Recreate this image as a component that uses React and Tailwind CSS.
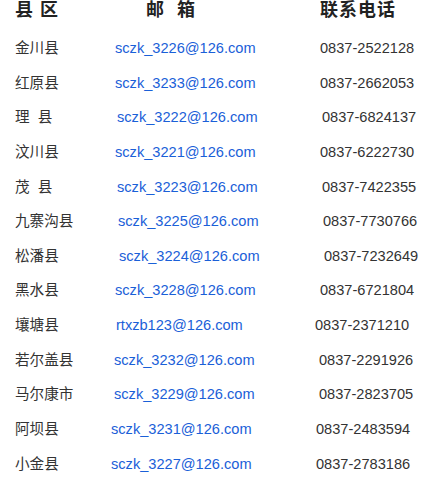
import React from 'react';

const rows = [
    { name: '金川县', email: 'sczk_3226@126.com', phone: '0837-2522128', ep: 'pl-[5px]', pp: 'pl-[10px]' },
    { name: '红原县', email: 'sczk_3233@126.com', phone: '0837-2662053', ep: 'pl-[5px]', pp: 'pl-[10px]' },
    { name: '理\u00a0\u00a0县', email: 'sczk_3222@126.com', phone: '0837-6824137', ep: 'pl-[7px]', pp: 'pl-[12px]' },
    { name: '汶川县', email: 'sczk_3221@126.com', phone: '0837-6222730', ep: 'pl-[5px]', pp: 'pl-[10px]' },
    { name: '茂\u00a0\u00a0县', email: 'sczk_3223@126.com', phone: '0837-7422355', ep: 'pl-[7px]', pp: 'pl-[12px]' },
    { name: '九寨沟县', email: 'sczk_3225@126.com', phone: '0837-7730766', ep: 'pl-[8px]', pp: 'pl-[13px]' },
    { name: '松潘县', email: 'sczk_3224@126.com', phone: '0837-7232649', ep: 'pl-[9px]', pp: 'pl-[14px]' },
    { name: '黑水县', email: 'sczk_3228@126.com', phone: '0837-6721804', ep: 'pl-[5px]', pp: 'pl-[10px]' },
    { name: '壤塘县', email: 'rtxzb123@126.com', phone: '0837-2371210', ep: 'pl-[6px]', pp: 'pl-[5px]' },
    { name: '若尔盖县', email: 'sczk_3232@126.com', phone: '0837-2291926', ep: 'pl-[4px]', pp: 'pl-[9px]' },
    { name: '马尔康市', email: 'sczk_3229@126.com', phone: '0837-2823705', ep: 'pl-[4px]', pp: 'pl-[9px]' },
    { name: '阿坝县', email: 'sczk_3231@126.com', phone: '0837-2483594', ep: 'pl-[1px]', pp: 'pl-[6px]' },
    { name: '小金县', email: 'sczk_3227@126.com', phone: '0837-2783186', ep: 'pl-[1px]', pp: 'pl-[6px]' },
];

export default function App() {
    return (
        <div className="w-[432px] h-[487px] bg-white text-[#333] font-['Liberation_Sans','Noto_Sans_CJK_SC',sans-serif]">
            {/* header */}
            <div className="flex items-center h-[20px] mb-[11.5px] pl-[15px] text-[18px] font-bold tracking-[1px] text-[#222]">
                <div className="w-[131px] shrink-0 whitespace-pre">县 区</div>
                <div className="w-[174px] shrink-0 whitespace-pre">邮  箱</div>
                <div>联系电话</div>
            </div>

            {/* rows */}
            <div className="flex flex-col">
                {rows.map((row) => (
                    <div key={row.email} className="flex items-center h-[34.67px] pl-[15px] text-[14.6px]">
                        <div className="w-[95px] shrink-0 whitespace-nowrap">{row.name}</div>
                        <div className={`w-[200px] shrink-0 text-[#1a60d8] ${row.ep}`}>{row.email}</div>
                        <div className={row.pp}>{row.phone}</div>
                    </div>
                ))}
            </div>
        </div>
    );
}
